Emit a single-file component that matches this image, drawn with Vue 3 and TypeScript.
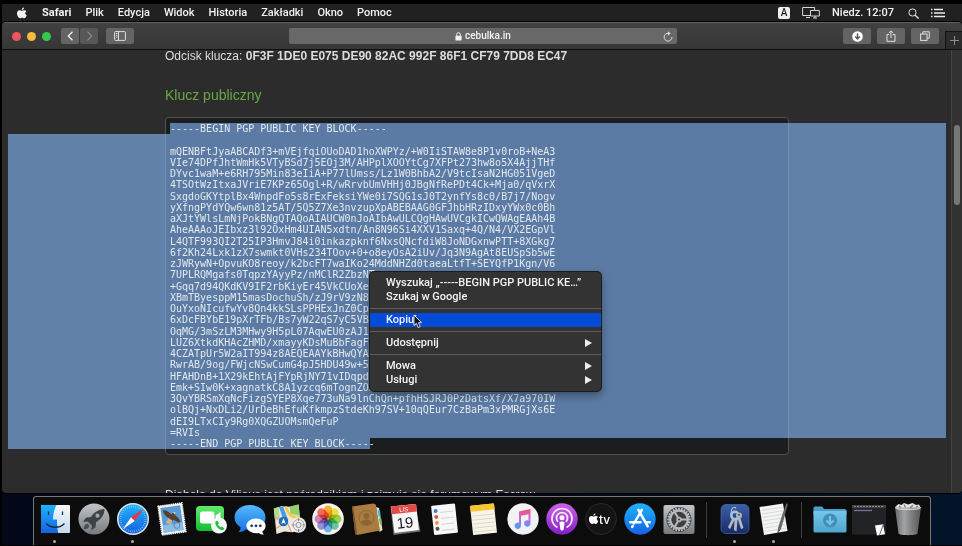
<script setup lang="ts">
import { ref } from 'vue'

const menus: string[] = ['Plik', 'Edycja', 'Widok', 'Historia', 'Zakładki', 'Okno', 'Pomoc']
const address = ref('cebulka.in')

const keyLines: string[] = [
  '-----BEGIN PGP PUBLIC KEY BLOCK-----',
  '',
  'mQENBFtJyaABCADf3+mVEjfqiOUoDAD1hoXWPYz/+W0IiSTAW8e8P1v0roB+NeA3',
  'VIe74DPfJhtWmHk5VTyBSd7j5EOj3M/AHPplXOOYtCg7XFPt273hw8o5X4AjjTHf',
  'DYvc1waM+e6RH795Min83eIiA+P77lUmss/Lz1W0BhbA2/V9tcIsaN2HG051VgeD',
  '4TSOtWzItxaJVriE7KPz65Ogl+R/wRrvbUmVHHj0JBgNfRePDt4Ck+Mja0/qVxrX',
  'SxgdoGKYtplBx4WnpdFo5s8rExFeksiYWe0i7SQG1sJ0T2ynfYs8c0/B7j7/Nogv',
  'yXfngPYdYQw6wn81z5AT/5Q5Z7Xe3nvzupXpABEBAAG0GFJhbHRzIDxyYWx0c0Bh',
  'aXJtYWlsLmNjPokBNgQTAQoAIAUCW0nJoAIbAwULCQgHAwUVCgkICwQWAgEAAh4B',
  'AheAAAoJEIbxz3l92OxHm4UIAN5xdtn/An8N96Si4XXV1Saxq+4Q/N4/VX2EGpVl',
  'L4QTF993QI2T25IP3HmvJ84i0inkazpknf6NxsQNcfdiW8JoNDGxnwPTT+8XGkg7',
  '6f2Kh24Lxk1zX7swmkt0VHs234TOov+0+o8eyOsA2iUv/Jq3N9AgAt8EUSpSb5wE',
  'zJWRywN+OpvuKO8reoy/k2bcFT7waIKo24MddNHZd0taeaLtfT+SEYQfP1Kgn/V6',
  '7UPLRQMgafs0TqpzYAyyPz/nMClR2ZbzNT',
  '+Gqq7d94QKdKV9IF2rbKiyEr45VkCUoXeT',
  'XBmTByesppM15masDochuSh/zJ9rV9zN85',
  'OuYxoNIcufwYv8Qn4kkSLsPPHExJnZ0Cpe',
  '6xDcFBYbE19pXrTFb/Bs7yW22qS7yC5VBA',
  'OqMG/3mSzLM3MHwy9H5pL07AqwEU0zAJ14',
  'LUZ6XtkdKHAcZHMD/xmayyKDsMuBbFagFT',
  '4CZATpUr5W2aIT994z8AEQEAAYkBHwQYAQ',
  'RwrAB/9og/FWjcNSwCumG4pJ5HDU49w+50',
  'HFAHDnB+1X29kEhtAjFYpRjNY71vIDqpde',
  'Emk+SIw0K+xagnatkC8A1yzcq6mTognZOJ',
  '3QvYBRSmXqNcFizgSYEP8Xqe773uNa9lnChQn+pfhHSJRJ0PzDatsXf/X7a970IW',
  'olBQj+NxDLi2/UrDeBhEfuKfkmpzStdeKh97SV+10qQEur7CzBaPm3xPMRGjXs6E',
  'dEI9LTxCIy9Rg0XQGZUOMsmQeFuP',
  '=RVIs',
  '-----END PGP PUBLIC KEY BLOCK-----',
]

const petals: { angle: number; color: string }[] = [
  { angle: 0, color: '#f7a51c' },
  { angle: 45, color: '#e9dc2b' },
  { angle: 90, color: '#93c83e' },
  { angle: 135, color: '#55bd9a' },
  { angle: 180, color: '#62a8dc' },
  { angle: 225, color: '#8d7fd0' },
  { angle: 270, color: '#c877ae' },
  { angle: 315, color: '#ef5a4c' },
]
const teeth: number[] = Array.from({ length: 24 }, (_, i) => i * 15)
</script>

<template>
  <div class="desktop">
    <header class="menubar">
      <button class="apple" aria-label="Apple">
        <svg width="10" height="12" viewBox="0 0 20 24"><path fill="#f2f2f2" d="M14 1c.2 2.500-2 5-4.400 4.800C9.300 3.400 11.600 1.200 14 1zM18.800 8.300c-3.500 2.200-3 6.800.7 8.300-1 3-3 6.100-5 6.100-1.600 0-2.200-1-4.100-1-2 0-2.600 1-4.100 1C3.200 22.700 0 17 0 12.700 0 8.700 2.600 6.500 5.300 6.500c1.900 0 3.300 1.200 4.700 1.200 1.200 0 2.800-1.300 5-1.200 1.600.1 2.900.7 3.800 1.800z" /></svg>
      </button>
      <nav class="menus">
        <button class="menu app-name">Safari</button>
        <button v-for="m in menus" :key="m" class="menu">{{ m }}</button>
      </nav>
      <div class="status">
        <span class="input-source">A</span>
        <svg class="displays" width="18" height="12" viewBox="0 0 18 12" fill="none" stroke="#d8d8d8">
          <path d="M8 8.500H.6v-8h12v2.500M4 10.500h4" /><path d="M8.500 3.500h8.800v5.500H8.500zM11 11h4M13 9v2" />
        </svg>
        <time class="clock">Niedz. 12:07</time>
        <button class="status-btn" aria-label="Spotlight">
          <svg width="11" height="11" viewBox="0 0 11 11" fill="none" stroke="#e4e4e4"><circle cx="4.500" cy="4.500" r="3.600" /><path d="M7.200 7.200l3.400 3.400" stroke-width="1.300" /></svg>
        </button>
        <button class="status-btn" aria-label="Centrum powiadomień">
          <svg width="14" height="10" viewBox="0 0 14 10" stroke="#ececec" stroke-width="1.300"><path d="M0 1.500h1.500M3 1.500h9M0 5h1.500M3 5h11M0 8.500h1.500M3 8.500h11" /></svg>
        </button>
      </div>
    </header>

    <main class="window">
      <div class="toolbar">
        <div class="tools">
          <div class="lights">
            <button class="light close" aria-label="Zamknij"></button>
            <button class="light minimize" aria-label="Minimalizuj"></button>
            <button class="light zoom" aria-label="Powiększ"></button>
          </div>
          <div class="history">
            <button class="tool back" aria-label="Wstecz"><svg width="7" height="10" viewBox="0 0 7 10" fill="none" stroke="#f0f0f0" stroke-width="1.300"><path d="M5.500.7L1.300 5l4.200 4.300" /></svg></button>
            <button class="tool forward" aria-label="Dalej"><svg width="7" height="10" viewBox="0 0 7 10" fill="none" stroke="#8b8b8b" stroke-width="1.200"><path d="M1.500.7L5.700 5 1.500 9.300" /></svg></button>
          </div>
          <button class="tool wide" aria-label="Pasek boczny"><svg width="12" height="10" viewBox="0 0 12 10" fill="none" stroke="#dedede"><rect x=".6" y=".6" width="10.800" height="8.800" rx=".8" /><path d="M4.500.6v8.800M2 2.500h1.300M2 4.300h1.300M2 6.100h1.300" /></svg></button>
        </div>
        <div class="address">
          <label class="site">
            <svg width="7" height="9" viewBox="0 0 7 9"><path d="M1.700 4V2.500a1.800 1.800 0 013.600 0V4" fill="none" stroke="#f0f0f0" /><rect x=".4" y="3.800" width="6.200" height="4.600" rx=".6" fill="#f0f0f0" /></svg>
            <input v-model="address" class="url" type="text" aria-label="Adres" />
          </label>
          <button class="reload" aria-label="Odśwież"><svg width="10" height="11" viewBox="0 0 10 11" fill="none" stroke="#dedede"><path d="M5.500 2.300A3.900 3.900 0 108.900 6" /><path d="M5 .2l2.700 2.200L5 4.500z" fill="#dedede" stroke="none" /></svg></button>
        </div>
        <div class="tools end">
          <button class="tool wide" aria-label="Pobrane"><svg width="11" height="11" viewBox="0 0 11 11"><circle cx="5.500" cy="5.500" r="5.300" fill="#fff" /><path d="M5.500 2.300v5.400M3.200 5.600l2.300 2.400 2.300-2.400" fill="none" stroke="#555" stroke-width="1.400" /></svg></button>
          <button class="tool wide" aria-label="Udostępnij stronę"><svg width="10" height="12" viewBox="0 0 10 12" fill="none" stroke="#dedede"><path d="M3.200 4.500H1v6.800h8V4.500H6.800M5 8V1M2.800 3L5 .9 7.200 3" /></svg></button>
          <button class="tool wide" aria-label="Wszystkie karty"><svg width="10" height="10" viewBox="0 0 10 10" fill="none" stroke="#dedede"><rect x=".6" y="3" width="6.400" height="6.400" /><path d="M2.800 3V.8h6.500v6.300H7" /></svg></button>
          <button class="new-tab" aria-label="Nowa karta"><svg width="9" height="9" viewBox="0 0 9 9" stroke="#8c8c8c"><path d="M4.500 0v9M0 4.500h9" /></svg></button>
        </div>
      </div>

      <div class="viewport">
        <article class="page">
          <p class="column line">Odcisk klucza: <strong>0F3F 1DE0 E075 DE90 82AC 992F 86F1 CF79 7DD8 EC47</strong></p>
          <h2 class="column heading">Klucz publiczny</h2>
          <section class="key">
            <pre class="column block"><code v-for="(l, i) in keyLines" :key="i" class="row">{{ l }}</code></pre>
            <div class="selection"></div>
            <div class="context" role="menu">
              <button class="item" role="menuitem">Wyszukaj „-----BEGIN PGP PUBLIC KE…”</button>
              <button class="item" role="menuitem">Szukaj w Google</button>
              <hr class="rule" />
              <button class="item active" role="menuitem">Kopiuj
                <svg class="pointer" width="10" height="15" viewBox="0 0 10 15"><path d="M1 1v10.500l2.400-2.200 1.800 4.300 2-.9-1.800-4h3.200z" fill="#111" stroke="#e8e8e8" stroke-width=".9" /></svg>
              </button>
              <hr class="rule" />
              <button class="item" role="menuitem">Udostępnij <i class="arrow"></i></button>
              <hr class="rule" />
              <button class="item" role="menuitem">Mowa <i class="arrow"></i></button>
              <button class="item" role="menuitem">Usługi <i class="arrow"></i></button>
            </div>
          </section>
          <p class="column line tail">Diabolo de Vilious jest pośrednikiem i zajmuje się forumowym Escrow</p>
        </article>
        <div class="scroll"><div class="thumb"></div></div>
      </div>
    </main>

    <footer class="dock">
      <svg class="defs" width="0" height="0">
        <defs>
          <linearGradient id="gBlue" x2="0" y2="1"><stop stop-color="#1fb3fa" /><stop offset="1" stop-color="#1462e0" /></linearGradient>
          <linearGradient id="gSky" x2="0" y2="1"><stop stop-color="#55b9fb" /><stop offset="1" stop-color="#1672e6" /></linearGradient>
          <linearGradient id="gPale" x2="0" y2="1"><stop stop-color="#f4f8fc" /><stop offset="1" stop-color="#c4d9ee" /></linearGradient>
          <linearGradient id="gGrey" x2="0" y2="1"><stop stop-color="#c2c5c7" /><stop offset="1" stop-color="#777b7f" /></linearGradient>
          <linearGradient id="gGreen" x2="0" y2="1"><stop stop-color="#62ea6b" /><stop offset="1" stop-color="#12bd35" /></linearGradient>
          <linearGradient id="gMusic" x2="0" y2="1"><stop stop-color="#f9506e" /><stop offset=".5" stop-color="#c46be8" /><stop offset="1" stop-color="#36a8f8" /></linearGradient>
          <linearGradient id="gPod" x2="0" y2="1"><stop stop-color="#cf62ec" /><stop offset="1" stop-color="#8420c4" /></linearGradient>
          <linearGradient id="gKeys" x2="0" y2="1"><stop stop-color="#3c5fa8" /><stop offset="1" stop-color="#182b68" /></linearGradient>
          <linearGradient id="gFolder" x2="0" y2="1"><stop stop-color="#75c6ea" /><stop offset="1" stop-color="#4fa5d0" /></linearGradient>
          <linearGradient id="gBin"><stop stop-color="#747678" /><stop offset=".35" stop-color="#b6b8ba" /><stop offset=".65" stop-color="#8b8d8f" /><stop offset="1" stop-color="#606264" /></linearGradient>
        </defs>
      </svg>

      <button class="app running" aria-label="Finder">
        <svg viewBox="0 0 36 36"><rect x="4" y="4" width="29" height="28" rx="1" fill="url(#gPale)" /><path d="M5 4h14.500c-2.400 4.500-3.300 9-3.500 14.500h4c0 5 .3 9.500 1.300 13.500H5a1 1 0 01-1-1V5a1 1 0 011-1z" fill="url(#gBlue)" /><path d="M11.500 10.500v3.500M25.500 10.500v3.500" stroke="#17344f" stroke-width="1.300" /><path d="M9 22.500c5 5 14 5 18.500 0" fill="none" stroke="#102a44" stroke-width="1.300" /></svg>
      </button>
      <button class="app" aria-label="Launchpad">
        <svg viewBox="0 0 36 36"><circle cx="18" cy="18" r="15.500" fill="url(#gGrey)" /><path d="M28.500 8c-6 .4-10.500 3.400-13.500 8l-5 .8-3 4.200 4.600-.4 4.400 4.200-.8 4.700 4.300-3.300.6-5c4.700-2.800 8.400-7 8.400-13.200z" fill="#3d4246" /><circle cx="21.500" cy="14.700" r="2.100" fill="#a2a6a9" /><path d="M11.300 22.500c-2.500.5-3.500 3-3.700 6 3-.3 5.400-1.300 6-3.700z" fill="#4b5054" /></svg>
      </button>
      <button class="app running" aria-label="Safari">
        <svg viewBox="0 0 36 36"><circle cx="18" cy="18" r="16" fill="#dfe5ea" /><circle cx="18" cy="18" r="14.500" fill="url(#gBlue)" /><circle cx="18" cy="18" r="12.500" fill="none" stroke="#a4d5fa" stroke-width="1.800" stroke-dasharray=".6 1.580" /><path d="M28.500 7.800L16 16.200l3.800 3.700z" fill="#f5353c" /><path d="M7.700 28.300L16 16.200l3.800 3.700z" fill="#f3f5f7" /></svg>
      </button>
      <button class="app" aria-label="Mail">
        <svg viewBox="0 0 36 36"><g transform="rotate(-8 18 18)"><rect x="6" y="3.500" width="24" height="29" fill="#f1f3f4" stroke="#f1f3f4" stroke-width="1.600" stroke-dasharray="1.300 .8" /><rect x="8" y="5.500" width="20" height="25" fill="#5b9bd4" /><path d="M8 23h20v7.500H8z" fill="#8cbde4" /><path d="M10 8c3 0 6 2 8 5.500l2-2 2.500 2-1.500 1c3 2.500 5 5 5 8-3-.8-5-1.800-6.500-3.500-1 1-3 1.500-5 1.500l2-3c-4-2-6-5-6.500-9.500z" fill="#563f2c" /><path d="M14 17l4 2-1.500 4-5-2z" fill="#c9b694" /><path d="M19.500 11.500l3 .5-1 1.800z" fill="#e9e7db" /><circle cx="22" cy="25" r="3" fill="none" stroke="#4579ac" stroke-width=".7" /></g></svg>
      </button>
      <button class="app" aria-label="FaceTime">
        <svg viewBox="0 0 36 36"><rect x="3" y="5" width="28" height="25" rx="4" fill="url(#gGreen)" /><rect x="7" y="10.500" width="14.500" height="12" rx="2.500" fill="#fff" /><path d="M22.500 14.500l5-3.500v10l-5-3.200z" fill="#fff" /><circle cx="26" cy="24.500" r="8" fill="#f5f7f6" /><path d="M22.500 20.500l1.700-1 1.800 2.700-1 1c.4 1.400 1.500 2.500 2.700 3.100l1.200-.8 2.500 2-1.200 1.500c-3.800 1-8.700-4.500-7.700-8.500z" fill="#22bd45" /></svg>
      </button>
      <button class="app" aria-label="Wiadomości">
        <svg viewBox="0 0 36 36"><path d="M18 4c8.800 0 15.500 5.300 15.500 12.500S26.800 29 18 29c-1.500 0-3-.2-4.300-.5-1.500 1.700-4.200 2.700-7.200 2.500 1.500-1.300 2.200-3 2-4.700C4.800 24 2.500 20.500 2.500 16.500 2.500 9.300 9.200 4 18 4z" fill="url(#gSky)" /><path d="M24 17.500c5.500 0 9.600 3.300 9.600 7.300 0 2.300-1.200 4.200-3.200 5.600.1 1.300.7 2.300 1.600 3.100-2 .1-3.800-.5-5-1.600-1 .2-2 .3-3 .3-5.400 0-9.600-3.400-9.600-7.400s4.200-7.300 9.600-7.300z" fill="#fff" /><g fill="#1a3b70"><circle cx="19.700" cy="24.800" r="1.400" /><circle cx="24" cy="24.800" r="1.400" /><circle cx="28.300" cy="24.800" r="1.400" /></g></svg>
      </button>
      <button class="app" aria-label="Mapy">
        <svg viewBox="0 0 36 36"><g transform="rotate(-6 18 18)"><path d="M4 6l8-1.500 8 1.500 9-1.500V30l-9 1.500-8-1.500-8 1.500z" fill="#ece8d8" /><path d="M20 6l9-1.500V16l-9-3z" fill="#95cf69" /><path d="M4 6l5-.9V16l-5 3z" fill="#b4d98d" /><path d="M10 5l2-.4 9 25.500-2 1z" fill="#fff" /><path d="M16 5c2 10 6 12 13 13" fill="none" stroke="#f5c944" stroke-width="2.500" /><path d="M4 26l12-5 3 10M4 15l12 5" fill="none" stroke="#e7a4a0" stroke-width="1.500" /></g><path d="M8 6l4-.5 5 13-4 2z" fill="#4699e7" /><circle cx="12.500" cy="20.500" r="4.800" fill="#236bbb" /><path d="M12.500 17l2.300 6-2.300-1.200-2.300 1.200z" fill="#fff" /><circle cx="27.500" cy="24" r="7.700" fill="#ececec" /><circle cx="27.500" cy="24" r="5.500" fill="none" stroke="#8b8b8b" stroke-width=".7" /><path d="M27.500 17v3M27.500 28v3M20.500 24h3M31.500 24h3" stroke="#777" stroke-width=".8" /><circle cx="27.500" cy="24" r="2.600" fill="none" stroke="#777" stroke-width=".8" /></svg>
      </button>
      <button class="app" aria-label="Zdjęcia">
        <svg viewBox="0 0 36 36"><circle cx="18" cy="18" r="15.800" fill="#f5f4f1" /><g class="blend"><rect v-for="p in petals" :key="p.angle" x="13.800" y="4.500" width="8.400" height="13" rx="4.200" :fill="p.color" fill-opacity=".88" :transform="`rotate(${p.angle} 18 18)`" /></g></svg>
      </button>
      <button class="app" aria-label="Kontakty">
        <svg viewBox="0 0 36 36"><path d="M27 6l3 1 3.500 22-3 2z" fill="#e7dfd0" /><path d="M28.500 9l2.500.5.7 6-2 .3z" fill="#49b7cf" /><path d="M29.800 17l2.500.3.800 6-2 .5z" fill="#79b953" /><path d="M3 5.500L24 2.500l2.800 1L31 29.500 8 34 6.200 33z" fill="#aa7c42" /><path d="M3 5.500l1.200-.2L8.300 34 6.200 33z" fill="#79542c" /><circle cx="17.500" cy="17" r="7.500" fill="none" stroke="#936b38" stroke-width="1.200" /><circle cx="17.500" cy="15" r="2.900" fill="#8d6533" /><path d="M12 21.500c1-3.500 9.500-4.500 11 0-3 3.500-8.500 3.500-11 0z" fill="#8d6533" /></svg>
      </button>
      <button class="app" aria-label="Kalendarz">
        <svg viewBox="0 0 36 36"><path d="M2.500 5.500L27 3l5.500 27.500-27 3.500z" fill="#6d6d6d" /><path d="M3 5.500L28 3l3 26-24.500 3z" fill="#f7f7f7" /><path d="M3 5.500L28 3l.9 7.500-24.900 2.700z" fill="#df4b49" /><text x="16" y="10.500" class="cal-month" transform="rotate(-6 16 10)">LIS</text><text x="17" y="27" class="cal-day" transform="rotate(-6 17 22)">19</text></svg>
      </button>
      <button class="app" aria-label="Przypomnienia">
        <svg viewBox="0 0 36 36"><g transform="rotate(-6 18 18)"><rect x="5.500" y="3.500" width="24" height="29.500" rx="1.200" fill="#f7f7f7" /><circle cx="9.500" cy="9" r="2" fill="#3d7ed8" /><circle cx="9.500" cy="15" r="2" fill="#e94c43" /><circle cx="9.500" cy="21" r="2" fill="#f09b37" /><circle cx="9.500" cy="27" r="2" fill="#555" /><path d="M14 11h13M14 17h13M14 23h13M14 29h13" stroke="#c7c7c7" stroke-width=".7" /></g></svg>
      </button>
      <button class="app" aria-label="Notatki">
        <svg viewBox="0 0 36 36"><g transform="rotate(-6 18 18)"><rect x="5.500" y="3.500" width="24" height="29.500" rx="1" fill="#f8f5e8" /><path d="M5.500 4.500a1 1 0 011-1h22a1 1 0 011 1v5h-24z" fill="#f8c52d" /><path d="M6 14h23M6 18h23M6 22h23M6 26h23M6 30h23" stroke="#d3d0c2" stroke-width=".7" /></g></svg>
      </button>
      <button class="app" aria-label="Muzyka">
        <svg viewBox="0 0 36 36"><circle cx="18" cy="18" r="15.700" fill="#f2f1f4" /><path d="M14 10.500L25.500 8v14.500a3.200 3.200 0 11-2-3V13.200l-7.500 1.600v10a3.200 3.200 0 11-2-3z" fill="url(#gMusic)" /></svg>
      </button>
      <button class="app" aria-label="Podcasty">
        <svg viewBox="0 0 36 36"><circle cx="18" cy="18" r="15.700" fill="url(#gPod)" /><g fill="none" stroke="#f6e8fc" stroke-width="1.800"><path d="M13.500 26.500a10 10 0 119 0" /><path d="M14 20.800a5.500 5.500 0 118 0" /></g><circle cx="18" cy="16.700" r="2.500" fill="#fff" /><path d="M15.400 21.500c.5-1.500 4.700-1.500 5.200 0l-1 7c-.4 1.400-2.800 1.400-3.200 0z" fill="#fff" /></svg>
      </button>
      <button class="app" aria-label="TV">
        <svg viewBox="0 0 36 36"><circle cx="18" cy="18" r="15.500" fill="#141414" stroke="#292929" /><path d="M12.500 12.500c.1 1.200-1 2.200-2.100 2.200-.1-1.200.9-2.200 2.100-2.200zM14.900 16c-1.700 1-1.400 3.300.4 4-.5 1.400-1.500 2.900-2.400 2.900-.8 0-1.100-.5-2-.5s-1.200.5-2 .5c-1.500 0-3-2.700-3-4.800 0-1.900 1.200-3 2.600-3 .9 0 1.500.6 2.200.6.6 0 1.300-.6 2.400-.6.8 0 1.400.4 1.800.9z" fill="#fff" /><text x="16" y="23" class="tv">tv</text></svg>
      </button>
      <button class="app" aria-label="App Store">
        <svg viewBox="0 0 36 36"><circle cx="18" cy="18" r="15.700" fill="url(#gBlue)" /><g stroke="#fff" stroke-width="2.500" stroke-linecap="round"><path d="M19.800 8.800L12 22.500M16.400 8.800l9.300 16.500M8.300 21.300h10.200M23.500 21.300h4.200M10.700 25l-.5.900" /></g></svg>
      </button>
      <button class="app" aria-label="Preferencje systemowe">
        <svg viewBox="0 0 36 36"><rect x="2.500" y="4" width="31" height="29" rx="2" fill="url(#gGrey)" /><circle cx="18" cy="18.500" r="12.500" fill="#3c3e40" /><rect v-for="t in teeth" :key="t" x="17.100" y="6.700" width="1.800" height="3" fill="#b8babc" :transform="`rotate(${t} 18 18.500)`" /><circle cx="18" cy="18.500" r="8.800" fill="none" stroke="#b8babc" stroke-width="2.200" /><path d="M18 18.500h8.500M18 18.500l-4.300-7.500M18 18.500L13.700 26" stroke="#b8babc" stroke-width="2" /><circle cx="18" cy="18.500" r="2.700" fill="#b8babc" /><circle cx="18" cy="18.500" r="1.100" fill="#3c3e40" /></svg>
      </button>
      <span class="divider"></span>
      <button class="app running" aria-label="Pęk kluczy">
        <svg viewBox="0 0 36 36"><rect x="4" y="3.500" width="28" height="29" rx="5" fill="url(#gKeys)" stroke="#4a6aae" stroke-width=".7" /><path d="M14 13c0-7 4-8 5-5.500" fill="none" stroke="#a9bccb" stroke-width="1.200" /><circle cx="18" cy="14.500" r="3.700" fill="none" stroke="#a4c5d6" stroke-width="2.500" /><path d="M15.500 17l-4.500 9 2 2.200 5-10.400zM17.500 18l-.5 11 2.500 1.500 1-12.500zM20.500 17l3.500 11 2.500-1-3.500-11z" fill="#b3bbc0" /><circle cx="22" cy="14.500" r="3" fill="#a8b7bd" /><circle cx="22" cy="13.800" r=".9" fill="#28447b" /></svg>
      </button>
      <button class="app running" aria-label="TextEdit">
        <svg viewBox="0 0 36 36"><path d="M3.500 6L27 2.500 31.500 30 8 34z" fill="#f4f4f2" /><path d="M5.500 9.500L26 6.300M6 13l21-3.300M6.500 16.500l21-3.300M7 20l21-3.300M7.600 23.500l21-3.300M8.200 27l21-3.300M8.800 30.500l21-3.300" stroke="#c9cdd0" stroke-width=".7" /><path d="M30.300 2.500l1.500.7L24.500 28l-2.800 4.300.8-5.300z" fill="#6c747a" stroke="#343b40" stroke-width=".6" /></svg>
      </button>
      <span class="divider"></span>
      <button class="app" aria-label="Pobrane rzeczy">
        <svg viewBox="0 0 36 36"><path d="M1.500 7a1.500 1.500 0 011.500-1.500h7l2.200 2.500H33a1.500 1.500 0 011.500 1.500V14h-33z" fill="#4b9fc9" /><path d="M1.500 10h33v20a1.500 1.500 0 01-1.500 1.500H3A1.500 1.500 0 011.500 30z" fill="url(#gFolder)" /><circle cx="18" cy="19.500" r="7" fill="#438fb9" /><path d="M18 15v7.500M14.500 19.500L18 23l3.500-3.500" fill="none" stroke="#72c0e3" stroke-width="2.200" /></svg>
      </button>
      <button class="app" aria-label="Zminimalizowane okno">
        <svg viewBox="0 0 36 36"><path d="M1 4h34v29.500H1z" fill="#222326" /><path d="M1 4h34v3H1z" fill="#434448" /><path d="M3 5.500h30" stroke="#85868a" stroke-dasharray="2 1" /><path d="M3 9.500h18" stroke="#73759d" stroke-width="1.300" /><path d="M24 24.500l8-1.300 2 10-8 1.300z" fill="#fff" /><path d="M32.500 23L28.500 34" stroke="#6d6d6d" /></svg>
      </button>
      <button class="app" aria-label="Kosz">
        <svg viewBox="0 0 36 36"><path d="M5.500 5.500L8.500 3l3 1 2.500-2 4 1.500L22.500 2l3.500 2 3-.5 1.500 3L29 9H7z" fill="#e3e3df" /><path d="M9 5l2 2M14 3.500l1.500 3M20 7l3-3M26 6l2-1" stroke="#7b7a72" stroke-width="1.200" /><path d="M5 6.500h26l-3.500 26c-.3 2.200-18.700 2.200-19 0z" fill="url(#gBin)" fill-opacity=".88" /><path d="M5 6.500c3 2.800 23 2.800 26 0" fill="none" stroke="#d8d9da" /></svg>
      </button>
    </footer>
  </div>
</template>

<style>
body {
  margin: 0;
  background: #000;
}
</style>

<style scoped>
.desktop {
  box-sizing: border-box;
  min-height: 100vh;
  display: flex;
  flex-direction: column;
  padding: 4px 0 1px 2px;
  background: linear-gradient(90deg, #020817, #020817 50%, #03142a);
  box-shadow: inset 2px 0 #000, inset 0 4px #000, inset 0 -1px #000;
  color: #f2f2f2;
  font: 500 11px/14px Roboto, Inter, sans-serif;
}
button {
  margin: 0;
  padding: 0;
  border: 0;
  background: none;
  color: inherit;
  font: inherit;
}
svg {
  display: block;
}
.menubar {
  display: flex;
  align-items: center;
  height: 18px;
  padding: 0 17px 0 15px;
  background: #212121;
}
.apple {
  width: 25px;
}
.menus {
  display: flex;
  gap: 14px;
  flex: 1;
}
.app-name {
  font-weight: 700;
}
.status {
  display: flex;
  align-items: center;
  gap: 12px;
}
.clock {
  margin-right: 2px;
}
.input-source {
  width: 12px;
  height: 12px;
  border-radius: 2px;
  background: #f0f0f0;
  color: #222;
  font-size: 10px;
  line-height: 12px;
  text-align: center;
}
.window {
  flex: 1;
  display: flex;
  flex-direction: column;
  overflow: hidden;
  border-radius: 4px;
  box-shadow: 0 0 0 1px #000;
  background: #2c2c2c;
}
.toolbar {
  box-sizing: border-box;
  height: 28px;
  display: grid;
  grid-template-columns: 1fr 388px 1fr;
  align-items: center;
  padding-left: 2px;
  border-top: 1px solid #606060;
  border-bottom: 1px solid #101010;
  background: linear-gradient(#414141, #363636);
}
.tools {
  display: flex;
  align-items: center;
  gap: 8px;
  padding-left: 8px;
}
.tools.end {
  gap: 6px;
  padding: 0;
  justify-content: flex-end;
  align-self: stretch;
}
.lights {
  display: flex;
  gap: 6px;
  padding-right: 2px;
}
.light {
  width: 9px;
  height: 9px;
  border-radius: 50%;
}
.close {
  background: #f2545b;
}
.minimize {
  background: #f5bb3c;
}
.zoom {
  background: #36c84b;
}
.history {
  display: flex;
  gap: 1px;
}
.tool {
  width: 18px;
  height: 16px;
  display: flex;
  align-items: center;
  justify-content: center;
  border-radius: 2px;
  background: #646464;
}
.forward {
  background: #575757;
}
.wide {
  width: 28px;
}
.address {
  display: flex;
  align-items: center;
  height: 16px;
  padding: 0 4px 0 14px;
  border-radius: 2px;
  background: #686868;
}
.site {
  flex: 1;
  display: flex;
  align-items: center;
  justify-content: center;
  gap: 3px;
}
.url {
  width: 46px;
  padding: 0;
  border: 0;
  outline: 0;
  background: none;
  color: #f2f2f2;
  font: 500 10px/14px Roboto, Inter, sans-serif;
}
.new-tab {
  align-self: flex-end;
  width: 17px;
  height: 18px;
  display: flex;
  align-items: center;
  justify-content: center;
  border: 1px solid #151515;
  border-width: 1px 0 0 1px;
  background: #2b2b2b;
}
.viewport {
  flex: 1 1 0;
  min-height: 0;
  display: flex;
}
.page {
  flex: 1;
  padding: 0 5px 0 6px;
  font-family: "Liberation Sans", Arial, sans-serif;
  font-weight: 400;
  color: #dcdcdc;
}
.column {
  box-sizing: border-box;
  width: 100%;
  max-width: 624px;
  margin: 0 auto;
}
.line {
  font-size: 12px;
  line-height: 12px;
}
.heading {
  padding: 23px 0 12px;
  color: #69a745;
  font-size: 14px;
  line-height: 20px;
  font-weight: 400;
}
.key {
  position: relative;
}
.block {
  display: flex;
  flex-direction: column;
  justify-content: space-between;
  min-height: 338px;
  padding: 5px 4px;
  border: 1px solid #505050;
  border-radius: 4px;
  background: #1c1d1f;
}
.row {
  position: relative;
  z-index: 1;
  height: 11px;
  color: #e2e8ee;
  font: 10px/11px "DejaVu Sans Mono", monospace;
}
.selection {
  position: absolute;
  inset: 6px 0;
  background: rgba(134, 186, 254, 0.6);
  clip-path: polygon(calc(50% - 307px) 0, 100% 0, 100% calc(100% - 11px), calc(50% - 107px) calc(100% - 11px), calc(50% - 107px) 100%, 0 100%, 0 11px, calc(50% - 307px) 11px);
}
.context {
  position: absolute;
  z-index: 2;
  top: 155px;
  left: calc(50% - 107px);
  width: 231px;
  padding: 4px 0;
  border-radius: 4px;
  background: #333;
  box-shadow: 0 0 0 1px #1c1c1c, 0 4px 10px rgba(0, 0, 0, 0.4);
  color: #f4f4f4;
  font: 500 11px/14px Roboto, Inter, sans-serif;
}
.item {
  position: relative;
  display: flex;
  align-items: center;
  justify-content: space-between;
  width: 100%;
  height: 14px;
  padding: 0 9px 0 16px;
  white-space: nowrap;
}
.active {
  background: #044bda;
}
.pointer {
  position: absolute;
  top: 1px;
  left: 43px;
}
.rule {
  height: 1px;
  margin: 4px 0;
  border: 0;
  background: #5c5c5c;
}
.arrow {
  border: 4px solid transparent;
  border-left: 7px solid #eee;
  border-right: 0;
}
.tail {
  margin-top: 34px;
}
.scroll {
  width: 10px;
  padding-top: 75px;
  border-left: 1px solid #434343;
  background: #323232;
}
.thumb {
  width: 6px;
  height: 80px;
  margin-left: 2px;
  border-radius: 3px;
  background: #777;
}
.dock {
  align-self: center;
  box-sizing: border-box;
  display: flex;
  height: 49px;
  margin-top: 3px;
  padding: 0 3px 0 1px;
  border: 1px solid #777;
  border-bottom: 0;
  border-radius: 3px 3px 0 0;
  background: #0c0c0c;
}
.defs {
  position: absolute;
}
.app {
  position: relative;
  width: 39px;
  padding-top: 4px;
  display: flex;
  justify-content: center;
}
.app svg {
  width: 36px;
  height: 36px;
}
.running::after {
  content: "";
  position: absolute;
  bottom: 2px;
  left: 18px;
  width: 3px;
  height: 3px;
  border-radius: 50%;
  background: #aaa;
}
.divider {
  width: 1px;
  height: 36px;
  margin: 5px 8px 0;
  background: #3d3d3d;
}
.blend {
  isolation: isolate;
}
.blend rect {
  mix-blend-mode: multiply;
}
.cal-month {
  fill: #fff;
  font: 6px "Liberation Sans", sans-serif;
  text-anchor: middle;
}
.cal-day {
  fill: #222;
  font: 15px "Liberation Sans", sans-serif;
  text-anchor: middle;
}
.tv {
  fill: #fff;
  font: 500 12px Inter, sans-serif;
}
</style>
